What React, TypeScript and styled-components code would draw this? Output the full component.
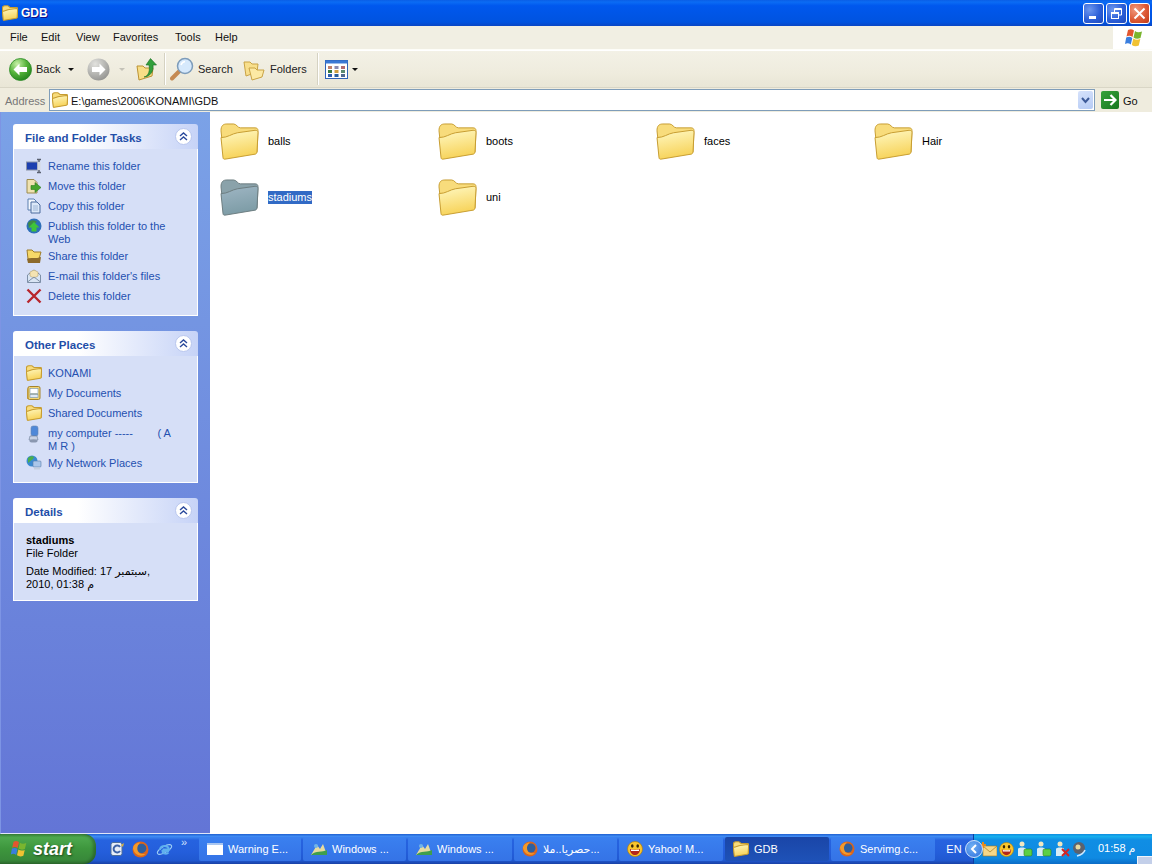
import React from "react";
import styled, { createGlobalStyle } from "styled-components";

const UI = `"Liberation Sans", "DejaVu Sans", sans-serif`;

const Global = createGlobalStyle`
  html, body { margin: 0; padding: 0; width: 1152px; height: 864px; overflow: hidden; background: #fff; }
  body { font-family: ${UI}; font-size: 11px; }
  * { box-sizing: border-box; }
`;

const Desktop = styled.div`
  position: relative; width: 1152px; height: 864px; display: flex; flex-direction: column; overflow: hidden;
`;

/* ---------- Title bar ---------- */
const TitleBar = styled.div`
  height: 26px; flex: none; display: flex; align-items: center; padding: 0 2px 0 2px;
  background: linear-gradient(180deg, #0a5ee6 0%, #0b6cf4 8%, #0058ee 22%, #0055e5 60%, #0053e0 85%, #0a46c4 100%);
`;
const TitleText = styled.span`
  margin-left: 3px; font: bold 12px ${UI}; color: #fff; flex: 1; text-shadow: 1px 1px 0 #0f1089;
`;
const WinButton = styled.div<{ $close?: boolean }>`
  width: 21px; height: 21px; margin-left: 2px; border: 1px solid #fff; border-radius: 3px; display: flex; align-items: center; justify-content: center;
  background: ${p => p.$close
    ? "radial-gradient(circle at 30% 30%, #f09a7f, #dd5a35 55%, #c03a17)"
    : "radial-gradient(circle at 30% 30%, #6d97ee, #2c5fd8 55%, #1f49bb)"};
`;

/* ---------- Menu bar ---------- */
const MenuBar = styled.div`
  height: 24px; flex: none; display: flex; align-items: center; padding: 0 0 2px 3px;
  background: #f1efe3; border-bottom: 1px solid #fdfdf8;
`;
const MenuItem = styled.span<{ $w: number }>`
  width: ${p => p.$w}px; padding-left: 7px; color: #111; font-size: 11px; flex: none;
`;
const MenuSpacer = styled.div`flex: 1;`;
const LogoBox = styled.div`
  width: 39px; height: 23px; margin-bottom: -2px; background: #fff; display: flex; align-items: center; justify-content: center; padding-left: 2px;
`;

/* ---------- Toolbar ---------- */
const ToolBar = styled.div`
  height: 38px; flex: none; display: flex; align-items: center; padding-left: 9px; color: #222;
  background: linear-gradient(180deg, #f3f1e6 0%, #efecde 60%, #e9e6d6 100%);
  border-top: 1px solid #fff;
  border-bottom: 1px solid #d9d6c6;
`;
const ToolLabel = styled.span<{ $l?: number; $w?: number }>`
  margin-left: ${p => p.$l ?? 3}px; font-size: 11px; color: #222; flex: none; width: ${p => (p.$w ? p.$w + "px" : "auto")};
`;
const Caret = styled.span<{ $l: number; $dim?: boolean }>`
  margin-left: ${p => p.$l}px; width: 0; height: 0; flex: none;
  border-left: 3px solid transparent; border-right: 3px solid transparent;
  border-top: 3px solid ${p => (p.$dim ? "#c4c2b8" : "#111")};
`;
const ToolSep = styled.div<{ $l: number; $r: number }>`
  width: 1px; height: 32px; background: #d5d2c2; box-shadow: 1px 0 0 #fff; margin: 0 ${p => p.$r}px 0 ${p => p.$l}px; flex: none;
`;
const ToolIcon = styled.span<{ $l?: number }>`
  display: inline-flex; flex: none; margin-left: ${p => p.$l ?? 0}px;
`;

/* ---------- Address bar ---------- */
const AddressBar = styled.div`
  height: 24px; flex: none; display: flex; align-items: center; padding-left: 5px; background: #efecde;
`;
const AddressLabel = styled.span`
  width: 44px; color: #777; font-size: 11px; flex: none; padding-top: 2px;
`;
const AddressField = styled.div`
  width: 1046px; height: 22px; flex: none; background: #fff; border: 1px solid #7f9db9; display: flex; align-items: center; padding-left: 2px; gap: 3px; font-size: 11px; color: #111;
`;
const AddressText = styled.span`flex: 1; padding-top: 2px;`;
const DropButton = styled.div`
  width: 15px; height: 18px; margin-right: 1px; border-radius: 2px; background: linear-gradient(160deg, #d6e2fb, #b6cbf5); display: flex; align-items: center; justify-content: center;
`;
const GoIcon = styled.div`
  margin-left: 6px; width: 18px; height: 18px; border-radius: 2px; background: linear-gradient(135deg, #37a33b, #16761e); display: flex; align-items: center; justify-content: center; flex: none;
`;
const GoLabel = styled.span`margin-left: 4px; color: #111; font-size: 11px; padding-top: 2px;`;

/* ---------- Main ---------- */
const Main = styled.div`
  flex: 1; display: flex; min-height: 0;
`;
const Sidebar = styled.div`
  width: 210px; flex: none; padding: 12px 12px 0 12px; display: flex; flex-direction: column; gap: 15px;
  background: linear-gradient(180deg, #7ba2e7 0%, #6375d6 100%);
  border-bottom: 1px solid #dfe6fa;
  border-left: 1px solid #7d94e4;
`;
const Panel = styled.section``;
const PanelHead = styled.div`
  height: 25px; border-radius: 3px 3px 0 0; display: flex; align-items: center; justify-content: space-between; padding: 2px 6px 0 12px;
  background: linear-gradient(90deg, #fff 0%, #fff 35%, #c6d3f7 100%);
`;
const PanelTitle = styled.span`
  font: bold 11.5px ${UI}; color: #1f4ea8;
`;
const Chevron = styled.div`
  width: 17px; height: 17px; border-radius: 50%; background: #fff; border: 1px solid #b8c6ee; display: flex; align-items: center; justify-content: center; margin-top: -3px;
`;
const PanelBody = styled.div<{ $pad: string }>`
  background: #d6dff7; padding: ${p => p.$pad}; border: 1px solid #fff; border-top: none;
`;
const TaskRow = styled.div`
  display: flex; align-items: flex-start; gap: 6px; padding: 4px 0 0; line-height: 13px; min-height: 20px; color: #2450b0; font-size: 11px;
`;
const TaskIcon = styled.span`
  width: 16px; height: 16px; flex: none; margin: -2px 0 -2px; display: flex;
`;
const DetailName = styled.div`
  font: bold 11px/13px ${UI}; color: #000;
`;
const DetailLine = styled.div<{ $gap?: number }>`
  font-size: 11px; line-height: 13px; color: #000; margin-top: ${p => p.$gap ?? 0}px;
`;

const FileArea = styled.div`
  flex: 1; background: #fff; padding: 1px 0 0 8px; display: grid; grid-template-columns: repeat(4, 218px); grid-auto-rows: 56px; align-content: start;
`;
const FileItem = styled.div`
  display: flex; align-items: center; gap: 9px; padding-left: 2px; font-size: 11px; color: #000;
`;
const FileName = styled.span<{ $sel?: boolean }>`
  background: ${p => (p.$sel ? "#316ac5" : "transparent")}; color: ${p => (p.$sel ? "#fff" : "#000")}; line-height: 13px;
`;

/* ---------- Taskbar ---------- */
const Taskbar = styled.div`
  height: 30px; flex: none; display: flex; align-items: stretch; color: #fff;
  background: linear-gradient(180deg, #1f5fd0 0%, #3f8cf3 8%, #2663e0 20%, #245edb 60%, #2058d0 88%, #1941a5 100%);
`;
const Start = styled.div`
  width: 96px; flex: none; display: flex; align-items: center; padding-left: 9px; gap: 4px; border-radius: 0 12px 12px 0;
  background: linear-gradient(180deg, #3a8a3c 0%, #4da84e 12%, #3d963d 50%, #38893a 85%, #2f6f2f 100%);
  box-shadow: inset -3px 0 3px rgba(0,0,0,.25);
`;
const StartText = styled.span`
  font: italic bold 18px ${UI}; color: #fff; text-shadow: 1px 1px 2px #1c4a1c;
`;
const Quick = styled.div`
  width: 103px; flex: none; display: flex; align-items: center; padding-left: 13px; gap: 7px; position: relative;
`;
const More = styled.span`
  position: absolute; left: 85px; top: 2px; font-size: 11px; color: #cfe0fb; line-height: 12px;
`;
const Tasks = styled.div`
  display: flex; align-items: center; width: 736px; flex: none;
`;
const TaskBtn = styled.div<{ $active?: boolean; $w: number }>`
  width: ${p => p.$w}px; height: 24px; margin-right: 2px; flex: none; border-radius: 2px; display: flex; align-items: center; gap: 5px; padding-left: 8px; font-size: 11px; white-space: nowrap; overflow: hidden; color: #fff;
  background: ${p => (p.$active ? "linear-gradient(180deg, #1a46a8, #1e52b7)" : "linear-gradient(180deg, #3a80f0, #3573e6)")};
`;
const Lang = styled.span`
  width: 38px; flex: none; text-align: center; font-size: 11px; line-height: 30px;
`;
const Tray = styled.div`
  flex: 1; display: flex; align-items: center; position: relative; padding-left: 6px; gap: 2px;
  background: linear-gradient(180deg, #0e8ce0 0%, #17b0ee 8%, #108ee4 20%, #0f8ae2 80%, #0c6cc6 100%);
  border-left: 1px solid #0f3da0;
`;
const TrayToggle = styled.div`
  position: absolute; left: -9px; top: 6px; width: 18px; height: 18px; border-radius: 50%;
  background: radial-gradient(circle at 40% 35%, #6fb0f4, #2f6fdc); border: 1px solid #cfe3fb; display: flex; align-items: center; justify-content: center;
`;
const Clock = styled.span`
  position: absolute; left: 124px; top: 8px; font-size: 11px; line-height: 13px; white-space: nowrap;
`;
const Peek = styled.div`
  position: absolute; right: 0; bottom: 0; width: 15px; height: 8px; background: #c3cfe9; border-top: 1px solid #eef3fb; border-left: 1px solid #eef3fb;
`;

/* ---------- Icons ---------- */
const Folder = ({ big, tone = "yellow" }: { big?: boolean; tone?: "yellow" | "grey" }) => {
  const t = tone === "yellow"
    ? { a: "#fff9c4", b: "#f7d35a", back: "#f8dc7c", line: "#c69c30" }
    : { a: "#9fb6c4", b: "#7d9ca6", back: "#8aa2aa", line: "#6c7c80" };
  const id = "fg" + (big ? "b" : "s") + tone;
  const sw = big ? 1 : 2.6;
  return (
    <svg width={big ? 39 : 16} height={big ? 37 : 16} viewBox="0 0 40 38" fill="none">
      <defs>
        <linearGradient id={id} x1="0" y1="0" x2="0.25" y2="1">
          <stop offset="0" stopColor={t.a} />
          <stop offset="1" stopColor={t.b} />
        </linearGradient>
      </defs>
      <path d="M1 8 C1 3 3 1 7 1 H14 C17 1 18 5 21 5 H36 C38 5 39 6 39 8 L38 30 L4 36 Z" fill={t.back} stroke={t.line} strokeWidth={sw} />
      <path d="M1 15 C8 15 12 11 18 10 L36 7.500 C38 7.500 39 8 39 10 L38 29 C38 31 37 32 36 32 L6 37 C4 37.500 3 37 3 35 Z" fill={`url(#${id})`} stroke={t.line} strokeWidth={sw} />
    </svg>
  );
};
const BackIcon = () => (
  <svg width="23" height="23" viewBox="0 0 23 23">
    <defs>
      <radialGradient id="bk" cx="35%" cy="25%" r="85%">
        <stop offset="0" stopColor="#c8f0a8" />
        <stop offset=".5" stopColor="#55b33a" />
        <stop offset="1" stopColor="#1c7d1a" />
      </radialGradient>
    </defs>
    <circle cx="11.500" cy="11.500" r="11" fill="url(#bk)" stroke="#2b8a26" strokeWidth=".8" />
    <path d="M4.500 11.500 L10.500 5.500 V9 H18 V14 H10.500 V17.500 Z" fill="#fff" />
  </svg>
);
const ForwardIcon = () => (
  <svg width="23" height="23" viewBox="0 0 23 23">
    <defs>
      <radialGradient id="fw" cx="35%" cy="25%" r="85%">
        <stop offset="0" stopColor="#e2e2de" />
        <stop offset="1" stopColor="#8f8f8c" />
      </radialGradient>
    </defs>
    <circle cx="11.500" cy="11.500" r="11" fill="url(#fw)" />
    <path d="M18.500 11.500 L12.500 5.500 V9 H5 V14 H12.500 V17.500 Z" fill="#fff" />
  </svg>
);
const UpIcon = () => (
  <svg width="22" height="24" viewBox="0 0 22 24">
    <path d="M1 9 H7 L9 11 H17 L16 19 L3 23 Z" fill="#f8de86" stroke="#bb9233" />
    <path d="M8 20 C13 19 14 13 13 8 H10 L14.500 1.500 L20.500 8 H17 C18 14 14 20 8 20 Z" fill="#32a03c" stroke="#1a6b22" strokeWidth=".6" />
  </svg>
);
const SearchIcon = () => (
  <svg width="25" height="25" viewBox="0 0 25 25">
    <path d="M9.500 14 L2 21.500" stroke="#c58a52" strokeWidth="4" strokeLinecap="round" />
    <circle cx="15" cy="9" r="7.500" fill="#d6e9fc" stroke="#7d9cba" strokeWidth="1.500" />
    <path d="M11 8 A5 5 0 0 1 15 4.500" stroke="#fff" strokeWidth="1.500" fill="none" />
  </svg>
);
const FoldersIcon = () => (
  <svg width="23" height="23" viewBox="0 0 23 23">
    <path d="M1 4 H7 L9 6 H15 L14 14 L3 18 Z" fill="#f8df8c" stroke="#c9a345" />
    <path d="M6 10 H12 L14 12 H21 L19 19 L9 22 Z" fill="#fce9a4" stroke="#c9a345" />
  </svg>
);
const ViewsIcon = () => (
  <svg width="23" height="19" viewBox="0 0 23 19">
    <rect x=".5" y=".5" width="22" height="18" fill="#fff" stroke="#2f63b8" />
    <rect x=".5" y=".5" width="22" height="3" fill="#3a78d4" />
    {[3, 9.500, 16].map((x, i) => [6, 10, 14].map((y, j) => (
      <rect key={`${i}${j}`} x={x} y={y} width="4" height="3" fill={["#c0806a", "#3a7a40", "#2f5fb0", "#8a8ab0", "#d0a040", "#2a5f9a", "#b06a70", "#5a8a70", "#506a90"][i * 3 + j]} />
    )))}
  </svg>
);
const XpLogo = ({ size = 22 }: { size?: number }) => (
  <svg width={size} height={size} viewBox="0 0 22 22">
    <path d="M5 3 C7 2 9 2 11 3.500 L9.500 10 C7.500 8.500 5.500 8.500 3.500 9.500 Z" fill="#e2562f" />
    <path d="M12 4 C14 5.500 16 5.500 19 4.500 L17.500 11 C15 12 12.500 12 10.500 10.500 Z" fill="#7ab52f" />
    <path d="M3.200 10.500 C5.500 9.500 7.500 9.500 9.300 11 L7.800 17.500 C6 16 4 16 2 17 Z" fill="#3a7ede" />
    <path d="M10.300 11.500 C12.500 13 15 13 17.300 12 L15.800 18.500 C13.500 19.500 11 19.500 8.800 18 Z" fill="#f1c232" />
  </svg>
);
const MinGlyph = () => <svg width="13" height="13" viewBox="0 0 13 13"><rect x="2" y="9" width="7" height="3" fill="#fff" /></svg>;
const MaxGlyph = () => (
  <svg width="13" height="13" viewBox="0 0 13 13" fill="none" stroke="#fff">
    <rect x="1.500" y="5.500" width="7" height="6" />
    <path d="M4.500 5 V1.500 H11.500 V8 H9" />
    <path d="M1.500 6.500 H8.500 M4.500 2.500 H11.500" />
  </svg>
);
const CloseGlyph = () => (
  <svg width="13" height="13" viewBox="0 0 13 13" stroke="#fff" strokeWidth="2"><path d="M1.500 1.500 L11.500 11.500 M11.500 1.500 L1.500 11.500" /></svg>
);
const ChevronsUp = () => (
  <svg width="9" height="9" viewBox="0 0 9 9" fill="none" stroke="#2a4a9c" strokeWidth="1.400">
    <path d="M1 4 L4.500 1 L8 4 M1 8 L4.500 5 L8 8" />
  </svg>
);
const RenameIcon = () => (
  <svg width="16" height="16" viewBox="0 0 16 16">
    <rect x="0.500" y="4" width="11" height="8" fill="#1c3fb0" stroke="#8a93a8" />
    <path d="M11 1.500 H15 M13 1.500 V14.500 M11 14.500 H15" stroke="#5a6070" strokeWidth="1.400" fill="none" />
    <rect x="11.500" y="4" width="3" height="8" fill="#d5d9e2" />
  </svg>
);
const MoveIcon = () => (
  <svg width="16" height="16" viewBox="0 0 16 16">
    <path d="M1 1.500 H8 L11 4.500 V15 H1 Z" fill="#efe2b0" stroke="#9b8a4f" />
    <path d="M5 7.500 H9 V4.500 L15 9.500 L9 14.500 V11.500 H5 Z" fill="#46a42e" stroke="#2d7a1c" strokeWidth=".6" />
  </svg>
);
const CopyIcon = () => (
  <svg width="16" height="16" viewBox="0 0 16 16">
    <path d="M2 1 H8 L10 3 V12 H2 Z" fill="#f4f8fe" stroke="#5b7fae" />
    <path d="M5 4 H11 L14 7 V15 H5 Z" fill="#dce8f8" stroke="#4d6d9e" />
    <path d="M7 8 H12 M7 10 H12 M7 12 H12" stroke="#8da8cc" strokeWidth=".8" />
  </svg>
);
const PublishIcon = () => (
  <svg width="16" height="16" viewBox="0 0 16 16">
    <circle cx="8" cy="8" r="7.500" fill="#2e6fb8" />
    <path d="M2 5 C5 1 9 2 11 4 C8 6 5 7 3 10 Z" fill="#3f8a46" />
    <path d="M8 4 L13.500 9.500 H10.500 V13.500 H5.500 V9.500 H2.500 Z" fill="#3fc43a" />
  </svg>
);
const ShareIcon = () => (
  <svg width="16" height="16" viewBox="0 0 16 16">
    <path d="M1 2 H6 L8 4 H15 L13 11 H2 Z" fill="#f6d868" stroke="#9e7d2d" />
    <path d="M1 11 C5 9 10 11 15 9 L14 15 H2 Z" fill="#8d6a2a" />
  </svg>
);
const MailIcon = () => (
  <svg width="16" height="16" viewBox="0 0 16 16">
    <path d="M1.500 7 L8 2 L14.500 7 V14.500 H1.500 Z" fill="#d9e5f4" stroke="#7e90a8" />
    <path d="M4 4 L8 2 L12 4 V8 L8 10 L4 8 Z" fill="#f4e3b2" stroke="#b09a60" strokeWidth=".5" />
    <path d="M1.500 14 L8 9 L14.500 14" stroke="#7e90a8" fill="none" />
  </svg>
);
const DeleteIcon = () => (
  <svg width="16" height="16" viewBox="0 0 16 16" stroke="#b8262c" strokeWidth="2.400">
    <path d="M1.500 1.500 L14.500 14.500 M14.500 1.500 L1.500 14.500" />
  </svg>
);
const DocsIcon = () => (
  <svg width="16" height="16" viewBox="0 0 16 16">
    <path d="M1 5 C1 3 2 3 3 3 V14 H1 Z" fill="#dcb24a" />
    <rect x="2" y="1.500" width="12" height="13" rx="1.500" fill="#f3d675" stroke="#a5832c" />
    <rect x="4" y="3.500" width="8" height="5" fill="#fff" stroke="#6f8fb0" strokeWidth=".6" />
    <rect x="4" y="9.500" width="8" height="3" fill="#dfe9f6" stroke="#6f8fb0" strokeWidth=".6" />
  </svg>
);
const ComputerIcon = () => (
  <svg width="16" height="18" viewBox="0 0 16 18">
    <rect x="5" y="1" width="7" height="10" rx="2" fill="#4f88d8" stroke="#6a86ae" strokeWidth=".6" />
    <path d="M4 11 H11 L12 15 H3 Z" fill="#c9d2e4" stroke="#6a7a96" strokeWidth=".6" />
    <ellipse cx="7.500" cy="16" rx="4" ry="1.500" fill="#8a97b0" />
  </svg>
);
const NetworkIcon = () => (
  <svg width="16" height="16" viewBox="0 0 16 16">
    <circle cx="6" cy="6" r="5.500" fill="#3a8ad0" />
    <path d="M2 3 C4 1 7 1 8 2 C7 5 5 5 2 8 Z" fill="#4cae4c" />
    <rect x="7" y="6" width="8" height="6" rx="1" fill="#a9c6ea" stroke="#5c7ca8" strokeWidth=".6" />
    <rect x="8" y="12.500" width="6" height="2" fill="#c4cfe0" />
  </svg>
);
const Firefox = ({ size = 16 }: { size?: number }) => (
  <svg width={size} height={size} viewBox="0 0 16 16">
    <circle cx="8" cy="8" r="7.500" fill="#d9651e" />
    <circle cx="9" cy="7" r="4.500" fill="#2e5f9e" />
    <path d="M1 7 C2 13 9 16 13 12 C10 13 5 12 5 7 C5 5 6 3 8 1.500 C4 1.500 1 4 1 7 Z" fill="#f39a2b" />
  </svg>
);
const IeIcon = () => (
  <svg width="17" height="17" viewBox="0 0 17 17" fill="none">
    <ellipse cx="8.500" cy="8.500" rx="8" ry="3" transform="rotate(-30 8.500 8.500)" stroke="#9fd0f5" strokeWidth="1" />
    <path d="M13 10 H6.500 C6.500 13 11 13.500 12.500 11.500 M4 9 C4 4 12 3.500 13 8.500 H6.500" stroke="#5fb0ee" strokeWidth="2" />
  </svg>
);
const LaunchIcon = () => (
  <svg width="16" height="16" viewBox="0 0 16 16">
    <rect x="2" y="1.500" width="11" height="13" rx="2" fill="#e8eef8" stroke="#4f6f9a" />
    <path d="M11 6 A3.500 3.500 0 1 0 11 10" stroke="#3d63a8" strokeWidth="2" fill="none" />
    <path d="M12 4 L15 2 L14 6 Z" fill="#d9b23c" />
  </svg>
);
const WindowMini = () => (
  <svg width="16" height="16" viewBox="0 0 16 16">
    <rect x="0" y="2" width="16" height="12" fill="#fff" />
    <rect x="0" y="2" width="16" height="2" fill="#a9c6f0" />
  </svg>
);
const Yahoo = ({ size = 16 }: { size?: number }) => (
  <svg width={size} height={size} viewBox="0 0 16 16">
    <circle cx="8" cy="8" r="7.500" fill="#fbc72c" stroke="#b07d10" strokeWidth=".7" />
    <ellipse cx="5.300" cy="5" rx="1.300" ry="1.800" fill="#3a2605" />
    <ellipse cx="10.700" cy="5" rx="1.300" ry="1.800" fill="#3a2605" />
    <path d="M3 8 C5 9 11 9 13 8 C13 12 10.500 14 8 14 C5.500 14 3 12 3 8 Z" fill="#b3261a" />
    <path d="M4 8.500 C6 9 10 9 12 8.500 V10 H4 Z" fill="#fff" />
  </svg>
);
const Network = () => (
  <svg width="16" height="14" viewBox="0 0 16 14">
    <path d="M0 13 L6 3 L9 7 L12 2 L16 13 Z" fill="#e6dba0" />
    <path d="M0 13 C5 8 11 11 16 8 L16 13 Z" fill="#3f9e4c" />
    <circle cx="5" cy="4" r="2" fill="#70b3e8" />
  </svg>
);
const TrayPerson = ({ bad }: { bad?: boolean }) => (
  <svg width="17" height="18" viewBox="0 0 17 18">
    <circle cx="6" cy="4" r="2.500" fill="#f3e7c0" />
    <path d="M2 16 V9 C2 7 10 7 10 9 V16 Z" fill="#d8ecf5" />
    {bad
      ? <path d="M8 9 L15 16 M15 9 L8 16" stroke="#d32525" strokeWidth="2" />
      : <rect x="8" y="9" width="8" height="7" rx="1.500" fill="#5cd045" stroke="#2f7a20" strokeWidth=".6" />}
  </svg>
);
const MailTray = () => (
  <svg width="17" height="15" viewBox="0 0 17 15">
    <rect x="3" y="4" width="14" height="10" fill="#f6d888" stroke="#a37820" strokeWidth=".6" />
    <path d="M3 4 L10 10 L17 4" fill="none" stroke="#a37820" strokeWidth=".7" />
    <path d="M3 0 V6 M0 3 H6" stroke="#e98a15" strokeWidth="2" />
  </svg>
);
const SoundTray = () => (
  <svg width="16" height="17" viewBox="1 0 16 17" overflow="visible">
    <circle cx="7" cy="7" r="6" fill="#5c626e" />
    <circle cx="6" cy="6" r="2.500" fill="#e8d9a0" />
    <path d="M13 9 C12 12 9 14 5 15" stroke="#cde8ff" strokeWidth="1.500" fill="none" />
  </svg>
);

type TaskItem = { icon: React.ReactNode; label: React.ReactNode };
const tasks: TaskItem[] = [
  { icon: <RenameIcon />, label: "Rename this folder" },
  { icon: <MoveIcon />, label: "Move this folder" },
  { icon: <CopyIcon />, label: "Copy this folder" },
  { icon: <PublishIcon />, label: "Publish this folder to the Web" },
  { icon: <ShareIcon />, label: "Share this folder" },
  { icon: <MailIcon />, label: "E-mail this folder's files" },
  { icon: <DeleteIcon />, label: "Delete this folder" },
];
const places: TaskItem[] = [
  { icon: <Folder />, label: "KONAMI" },
  { icon: <DocsIcon />, label: "My Documents" },
  { icon: <Folder />, label: "Shared Documents" },
  { icon: <ComputerIcon />, label: <>my computer -----&nbsp;&nbsp;&nbsp;&nbsp;&nbsp;&nbsp;&nbsp;&nbsp;( A<br />M R )</> },
  { icon: <NetworkIcon />, label: "My Network Places" },
];
const files = [
  { name: "balls" }, { name: "boots" }, { name: "faces" }, { name: "Hair" },
  { name: "stadiums", sel: true }, { name: "uni" },
];
const menus: [string, number][] = [["File", 31], ["Edit", 35], ["View", 37], ["Favorites", 62], ["Tools", 40], ["Help", 40]];
const taskButtons: { icon: React.ReactNode; label: string; active?: boolean; w: number }[] = [
  { icon: <WindowMini />, label: "Warning E...", w: 102 },
  { icon: <Network />, label: "Windows ...", w: 103 },
  { icon: <Network />, label: "Windows ...", w: 104 },
  { icon: <Firefox />, label: "حصريا..ملا...", w: 103 },
  { icon: <Yahoo />, label: "Yahoo! M...", w: 104 },
  { icon: <Folder />, label: "GDB", active: true, w: 104 },
  { icon: <Firefox />, label: "Servimg.c...", w: 104 },
];

const TaskList = ({ items }: { items: TaskItem[] }) => (
  <>
    {items.map((t, i) => (
      <TaskRow key={i}><TaskIcon>{t.icon}</TaskIcon><span>{t.label}</span></TaskRow>
    ))}
  </>
);
const Head = ({ title }: { title: string }) => (
  <PanelHead><PanelTitle>{title}</PanelTitle><Chevron><ChevronsUp /></Chevron></PanelHead>
);

export default function App() {
  return (
    <Desktop>
      <Global />
      <TitleBar>
        <Folder />
        <TitleText>GDB</TitleText>
        <WinButton><MinGlyph /></WinButton>
        <WinButton><MaxGlyph /></WinButton>
        <WinButton $close><CloseGlyph /></WinButton>
      </TitleBar>
      <MenuBar>
        {menus.map(([m, w]) => <MenuItem key={m} $w={w}>{m}</MenuItem>)}
        <MenuSpacer />
        <LogoBox><XpLogo /></LogoBox>
      </MenuBar>
      <ToolBar>
        <BackIcon />
        <ToolLabel $l={4} $w={32}>Back</ToolLabel>
        <Caret $l={0} />
        <ToolIcon $l={13}><ForwardIcon /></ToolIcon>
        <Caret $l={9} $dim />
        <ToolIcon $l={11}><UpIcon /></ToolIcon>
        <ToolSep $l={6} $r={5} />
        <SearchIcon />
        <ToolLabel $l={3} $w={45}>Search</ToolLabel>
        <FoldersIcon />
        <ToolLabel $l={4} $w={47}>Folders</ToolLabel>
        <ToolSep $l={0} $r={7} />
        <ViewsIcon />
        <Caret $l={4} />
      </ToolBar>
      <AddressBar>
        <AddressLabel>Address</AddressLabel>
        <AddressField>
          <Folder />
          <AddressText>E:\games\2006\KONAMI\GDB</AddressText>
          <DropButton>
            <svg width="9" height="7" viewBox="0 0 9 7" fill="none" stroke="#3d5a98" strokeWidth="2"><path d="M1 1 L4.500 5 L8 1" /></svg>
          </DropButton>
        </AddressField>
        <GoIcon>
          <svg width="14" height="12" viewBox="0 0 14 12" fill="none" stroke="#fff" strokeWidth="2.200"><path d="M1 6 H12 M7.500 1 L12.500 6 L7.500 11" /></svg>
        </GoIcon>
        <GoLabel>Go</GoLabel>
      </AddressBar>
      <Main>
        <Sidebar>
          <Panel>
            <Head title="File and Folder Tasks" />
            <PanelBody $pad="7px 20px 9px 12px"><TaskList items={tasks} /></PanelBody>
          </Panel>
          <Panel>
            <Head title="Other Places" />
            <PanelBody $pad="7px 20px 9px 12px"><TaskList items={places} /></PanelBody>
          </Panel>
          <Panel>
            <Head title="Details" />
            <PanelBody $pad="11px 12px 9px 12px">
              <DetailName>stadiums</DetailName>
              <DetailLine>File Folder</DetailLine>
              <DetailLine $gap={5}>Date Modified: 17 سبتمبر,</DetailLine>
              <DetailLine>2010, 01:38 م</DetailLine>
            </PanelBody>
          </Panel>
        </Sidebar>
        <FileArea>
          {files.map(f => (
            <FileItem key={f.name}>
              <Folder big tone={f.sel ? "grey" : "yellow"} />
              <FileName $sel={f.sel}>{f.name}</FileName>
            </FileItem>
          ))}
        </FileArea>
      </Main>
      <Taskbar>
        <Start><XpLogo size={20} /><StartText>start</StartText></Start>
        <Quick>
          <LaunchIcon />
          <Firefox size={17} />
          <IeIcon />
          <More>»</More>
        </Quick>
        <Tasks>
          {taskButtons.map((b, i) => (
            <TaskBtn key={i} $w={b.w} $active={b.active}>{b.icon}<span>{b.label}</span></TaskBtn>
          ))}
        </Tasks>
        <Lang>EN</Lang>
        <Tray>
          <TrayToggle>
            <svg width="8" height="10" viewBox="0 0 8 10" fill="none" stroke="#fff" strokeWidth="2"><path d="M6 1 L2 5 L6 9" /></svg>
          </TrayToggle>
          <MailTray />
          <Yahoo size={15} />
          <TrayPerson />
          <TrayPerson />
          <TrayPerson bad />
          <SoundTray />
          <Clock>01:58 م</Clock>
          <Peek />
        </Tray>
      </Taskbar>
    </Desktop>
  );
}
